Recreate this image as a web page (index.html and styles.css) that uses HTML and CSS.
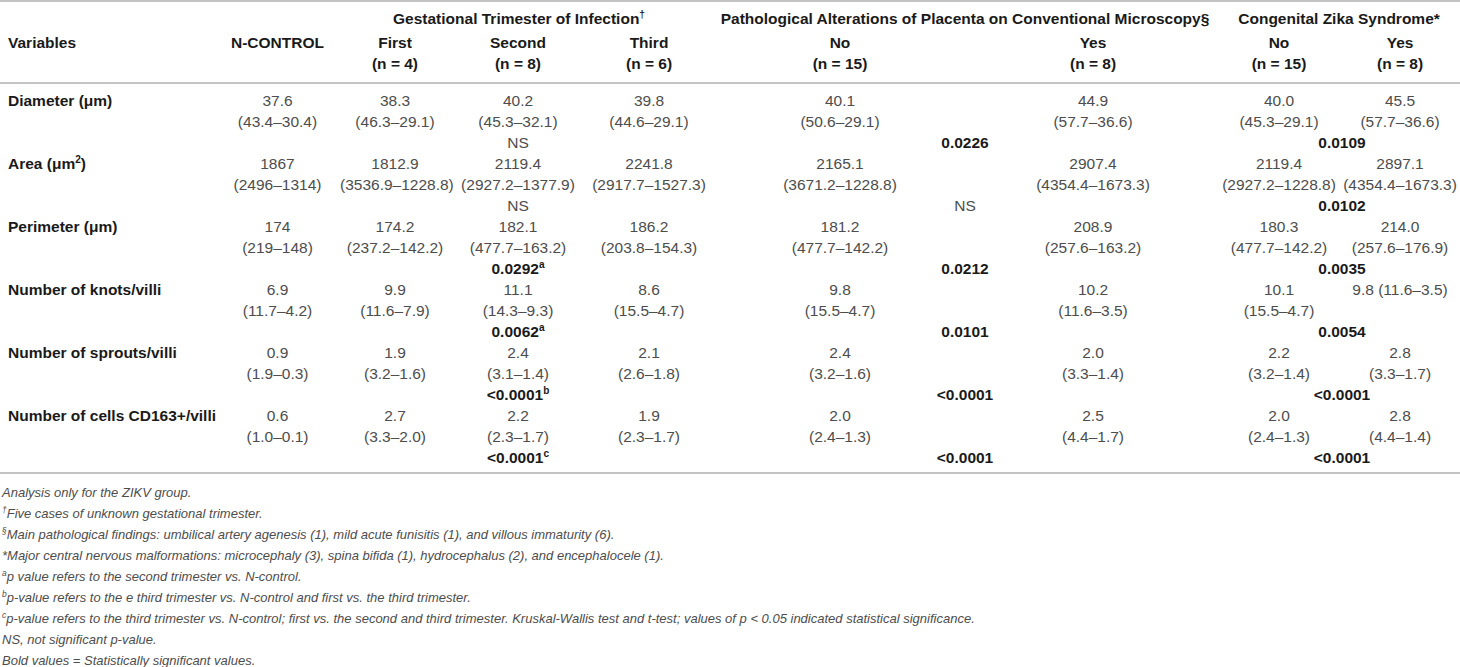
FILE: index.html
```html
<!DOCTYPE html>
<html lang="en">
<head>
<meta charset="utf-8">
<title>Placental villi morphometry</title>
<link rel="stylesheet" href="styles.css">
</head>
<body>
<div class="tablewrap">
<table class="t">
<colgroup>
<col class="c-var"><col class="c-ctrl"><col class="c-first"><col class="c-second"><col class="c-third"><col class="c-pno"><col class="c-pyes"><col class="c-zno"><col class="c-zyes">
</colgroup>
<thead>
<tr class="h1">
<th></th><th></th>
<th colspan="3" class="g-gest">Gestational Trimester of Infection<sup>†</sup></th>
<th colspan="2">Pathological Alterations of Placenta on Conventional Microscopy§</th>
<th colspan="2" class="g-czs">Congenital Zika Syndrome*</th>
</tr>
<tr class="h2">
<th class="var">Variables</th><th>N-CONTROL</th><th>First</th><th>Second</th><th>Third</th><th>No</th><th>Yes</th><th>No</th><th>Yes</th>
</tr>
<tr class="h3">
<th></th><th></th><th>(n = 4)</th><th>(n = 8)</th><th>(n = 6)</th><th>(n = 15)</th><th>(n = 8)</th><th>(n = 15)</th><th>(n = 8)</th>
</tr>
</thead>
<tbody>
<tr class="first">
<td class="var">Diameter (μm)</td><td>37.6</td><td>38.3</td><td>40.2</td><td>39.8</td><td>40.1</td><td>44.9</td><td>40.0</td><td>45.5</td>
</tr>
<tr>
<td></td><td>(43.4–30.4)</td><td>(46.3–29.1)</td><td>(45.3–32.1)</td><td>(44.6–29.1)</td><td>(50.6–29.1)</td><td>(57.7–36.6)</td><td>(45.3–29.1)</td><td>(57.7–36.6)</td>
</tr>
<tr>
<td></td><td></td><td></td><td>NS</td><td></td><td colspan="2"><b>0.0226</b></td><td colspan="2" class="pz"><b>0.0109</b></td>
</tr>

<tr>
<td class="var">Area (μm<sup>2</sup>)</td><td>1867</td><td>1812.9</td><td>2119.4</td><td>2241.8</td><td>2165.1</td><td>2907.4</td><td>2119.4</td><td>2897.1</td>
</tr>
<tr>
<td></td><td>(2496–1314)</td><td>(3536.9–1228.8)</td><td>(2927.2–1377.9)</td><td>(2917.7–1527.3)</td><td>(3671.2–1228.8)</td><td>(4354.4–1673.3)</td><td>(2927.2–1228.8)</td><td>(4354.4–1673.3)</td>
</tr>
<tr>
<td></td><td></td><td></td><td>NS</td><td></td><td colspan="2">NS</td><td colspan="2" class="pz"><b>0.0102</b></td>
</tr>

<tr>
<td class="var">Perimeter (μm)</td><td>174</td><td>174.2</td><td>182.1</td><td>186.2</td><td>181.2</td><td>208.9</td><td>180.3</td><td>214.0</td>
</tr>
<tr>
<td></td><td>(219–148)</td><td>(237.2–142.2)</td><td>(477.7–163.2)</td><td>(203.8–154.3)</td><td>(477.7–142.2)</td><td>(257.6–163.2)</td><td>(477.7–142.2)</td><td>(257.6–176.9)</td>
</tr>
<tr>
<td></td><td></td><td></td><td><b>0.0292<sup>a</sup></b></td><td></td><td colspan="2"><b>0.0212</b></td><td colspan="2" class="pz"><b>0.0035</b></td>
</tr>

<tr>
<td class="var">Number of knots/villi</td><td>6.9</td><td>9.9</td><td>11.1</td><td>8.6</td><td>9.8</td><td>10.2</td><td>10.1</td><td>9.8 (11.6–3.5)</td>
</tr>
<tr>
<td></td><td>(11.7–4.2)</td><td>(11.6–7.9)</td><td>(14.3–9.3)</td><td>(15.5–4.7)</td><td>(15.5–4.7)</td><td>(11.6–3.5)</td><td>(15.5–4.7)</td><td></td>
</tr>
<tr>
<td></td><td></td><td></td><td><b>0.0062<sup>a</sup></b></td><td></td><td colspan="2"><b>0.0101</b></td><td colspan="2" class="pz"><b>0.0054</b></td>
</tr>

<tr>
<td class="var">Number of sprouts/villi</td><td>0.9</td><td>1.9</td><td>2.4</td><td>2.1</td><td>2.4</td><td>2.0</td><td>2.2</td><td>2.8</td>
</tr>
<tr>
<td></td><td>(1.9–0.3)</td><td>(3.2–1.6)</td><td>(3.1–1.4)</td><td>(2.6–1.8)</td><td>(3.2–1.6)</td><td>(3.3–1.4)</td><td>(3.2–1.4)</td><td>(3.3–1.7)</td>
</tr>
<tr>
<td></td><td></td><td></td><td><b>&lt;0.0001<sup>b</sup></b></td><td></td><td colspan="2"><b>&lt;0.0001</b></td><td colspan="2" class="pz"><b>&lt;0.0001</b></td>
</tr>

<tr>
<td class="var">Number of cells CD163+/villi</td><td>0.6</td><td>2.7</td><td>2.2</td><td>1.9</td><td>2.0</td><td>2.5</td><td>2.0</td><td>2.8</td>
</tr>
<tr>
<td></td><td>(1.0–0.1)</td><td>(3.3–2.0)</td><td>(2.3–1.7)</td><td>(2.3–1.7)</td><td>(2.4–1.3)</td><td>(4.4–1.7)</td><td>(2.4–1.3)</td><td>(4.4–1.4)</td>
</tr>
<tr class="last">
<td></td><td></td><td></td><td><b>&lt;0.0001<sup>c</sup></b></td><td></td><td colspan="2"><b>&lt;0.0001</b></td><td colspan="2" class="pz"><b>&lt;0.0001</b></td>
</tr>
</tbody>
</table>
</div>
<div class="notes">
<p>Analysis only for the ZIKV group.</p>
<p><sup>†</sup>Five cases of unknown gestational trimester.</p>
<p><sup>§</sup>Main pathological findings: umbilical artery agenesis (1), mild acute funisitis (1), and villous immaturity (6).</p>
<p>*Major central nervous malformations: microcephaly (3), spina bifida (1), hydrocephalus (2), and encephalocele (1).</p>
<p><sup>a</sup>p value refers to the second trimester vs. N-control.</p>
<p><sup>b</sup>p-value refers to the e third trimester vs. N-control and first vs. the third trimester.</p>
<p><sup>c</sup>p-value refers to the third trimester vs. N-control; first vs. the second and third trimester. Kruskal-Wallis test and t-test; values of p &lt; 0.05 indicated statistical significance.</p>
<p>NS, not significant p-value.</p>
<p>Bold values = Statistically significant values.</p>
</div>
</body>
</html>
```

FILE: styles.css
```css
html, body {
  margin: 0;
  padding: 0;
  background: #ffffff;
}

body {
  font-family: "Liberation Sans", Arial, Helvetica, sans-serif;
  color: #4d4d4d;
  width: 1460px;
}

.tablewrap {
  border-top: 2px solid #c4c4c4;
}

.t {
  width: 1460px;
  table-layout: fixed;
  border-collapse: separate;
  border-spacing: 0;
  font-size: 15.5px;
  line-height: 21px;
}

.c-var { width: 215px; }
.c-ctrl { width: 125px; }
.c-first { width: 110px; }
.c-second { width: 136px; }
.c-third { width: 126px; }
.c-pno { width: 256px; }
.c-pyes { width: 250px; }
.c-zno { width: 122px; }
.c-zyes { width: 120px; }

.t th,
.t td {
  padding: 0;
  text-align: center;
  white-space: nowrap;
  vertical-align: top;
}

.t th {
  font-weight: bold;
  color: #1a1a1a;
}

.t .var {
  text-align: left;
  padding-left: 8px;
  font-weight: bold;
  color: #1a1a1a;
}

.t b {
  color: #1a1a1a;
}

.h1 th {
  padding-top: 6px;
}

.h2 th {
  padding-top: 3px;
}

.h3 th {
  padding-bottom: 8px;
  border-bottom: 2px solid #c4c4c4;
}

.g-gest {
  padding-right: 14px !important;
}

.g-czs,
.t .pz {
  padding-left: 6px;
}

tbody tr.first td {
  padding-top: 6px;
}

tbody tr.last td {
  padding-bottom: 4px;
  border-bottom: 2px solid #c4c4c4;
}

sup {
  font-size: 0.65em;
  line-height: 0;
  vertical-align: 0.55em;
}

.notes {
  margin-top: 8px;
  font-size: 13px;
  line-height: 21px;
  font-style: italic;
  color: #4d4d4d;
}

.notes p {
  margin: 0;
  padding-left: 2px;
}
```
